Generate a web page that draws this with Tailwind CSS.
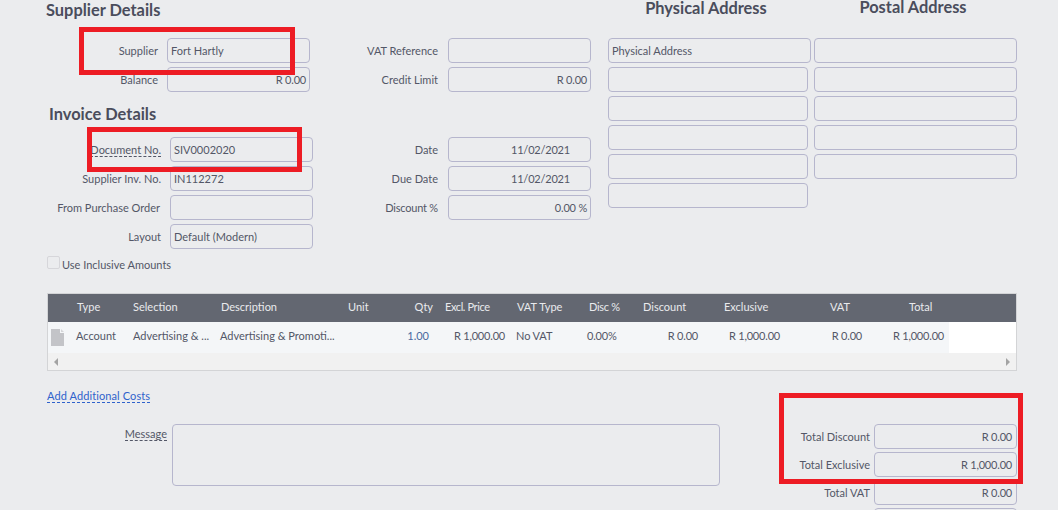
<!DOCTYPE html>
<html lang="en">
<head>
  <meta charset="UTF-8"/>
  <title>Supplier Invoice</title>
  <script src="https://cdn.jsdelivr.net/npm/@tailwindcss/browser@4"></script>
</head>
<body class="relative w-[1058px] h-[510px] overflow-hidden bg-[#ebecee] font-['Lato',sans-serif] text-[11px] text-[#535767]">

  <!-- top form -->
  <div class="flex h-[293px]">
    <div class="w-[591px]">
      <h2 class="h-[38px] pl-[46px] text-[16.4px] leading-[20px] font-bold text-[#4a4d5c]">Supplier Details</h2>

      <div class="grid grid-cols-[310px_281px] gap-y-[4px]">
        <div class="flex items-center"><span class="w-[158px] pt-[2px] text-right">Supplier</span><div class="ml-[9px] w-[143px] h-[25px] px-[3px] pt-[2px] flex items-center border border-[#b6b6cd] rounded-[4px]">Fort Hartly</div></div>
        <div class="flex items-center"><span class="w-[128px] pt-[2px] text-right">VAT Reference</span><div class="ml-[10px] w-[143px] h-[25px] px-[3px] flex items-center border border-[#b6b6cd] rounded-[4px]"></div></div>
        <div class="flex items-center"><span class="w-[158px] pt-[2px] text-right">Balance</span><div class="ml-[9px] w-[143px] h-[25px] pl-[3px] pr-[3px] pt-[2px] flex items-center justify-end border border-[#b6b6cd] rounded-[4px] tracking-[-0.2px]">R 0.00</div></div>
        <div class="flex items-center"><span class="w-[128px] pt-[2px] text-right">Credit Limit</span><div class="ml-[10px] w-[143px] h-[25px] pl-[3px] pr-[3px] pt-[2px] flex items-center justify-end border border-[#b6b6cd] rounded-[4px] tracking-[-0.2px]">R 0.00</div></div>
      </div>

      <h2 class="h-[45px] pl-[49px] pt-[12px] text-[16.4px] leading-[20px] font-bold text-[#4a4d5c]">Invoice Details</h2>

      <div class="grid grid-cols-[313px_278px] gap-y-[4px]">
        <div class="flex items-center"><span class="w-[161px] pt-[2px] text-right"><span class="border-b border-dashed border-[#535767]">Document No.</span></span><div class="ml-[9px] w-[143px] h-[25px] px-[3px] pt-[2px] flex items-center border border-[#b6b6cd] rounded-[4px]">SIV0002020</div></div>
        <div class="flex items-center"><span class="w-[125px] pt-[2px] text-right">Date</span><div class="ml-[10px] w-[143px] h-[25px] pr-[20px] pt-[2px] flex items-center justify-end border border-[#b6b6cd] rounded-[4px] tracking-[-0.2px]">11/02/2021</div></div>
        <div class="flex items-center"><span class="w-[161px] pt-[2px] text-right">Supplier Inv. No.</span><div class="ml-[9px] w-[143px] h-[25px] px-[3px] pt-[2px] flex items-center border border-[#b6b6cd] rounded-[4px]">IN112272</div></div>
        <div class="flex items-center"><span class="w-[125px] pt-[2px] text-right">Due Date</span><div class="ml-[10px] w-[143px] h-[25px] pr-[20px] pt-[2px] flex items-center justify-end border border-[#b6b6cd] rounded-[4px] tracking-[-0.2px]">11/02/2021</div></div>
        <div class="flex items-center"><span class="w-[160px] mr-[1px] pt-[2px] text-right">From Purchase Order</span><div class="ml-[9px] w-[143px] h-[25px] px-[3px] flex items-center border border-[#b6b6cd] rounded-[4px]"></div></div>
        <div class="flex items-center"><span class="w-[125px] pt-[2px] text-right tracking-[-0.2px]">Discount %</span><div class="ml-[10px] w-[143px] h-[25px] pl-[3px] pr-[3px] pt-[2px] flex items-center justify-end border border-[#b6b6cd] rounded-[4px] tracking-[-0.2px]">0.00 %</div></div>
        <div class="flex items-center"><span class="w-[161px] pt-[2px] text-right">Layout</span><div class="ml-[9px] w-[143px] h-[25px] px-[3px] pt-[2px] flex items-center border border-[#b6b6cd] rounded-[4px]">Default (Modern)</div></div>
      </div>

      <label class="flex items-center mt-[7px] pl-[47px] h-[13px]">
        <span class="w-[13px] h-[13px] border border-[#d6d6da] rounded-[2px]"></span>
        <span class="ml-[2px] mt-[5px]">Use Inclusive Amounts</span>
      </label>
    </div>

    <div class="ml-[17px] w-[203px]">
      <h2 class="h-[38px] pr-[7px] text-center text-[16.4px] leading-[16px] font-bold text-[#4a4d5c] whitespace-nowrap">Physical Address</h2>
      <div class="flex flex-col gap-[4px]">
        <div class="w-[203px] h-[25px] px-[3px] pt-[2px] flex items-center border border-[#b6b6cd] rounded-[4px]">Physical Address</div>
        <div class="w-[200px] h-[25px] border border-[#b6b6cd] rounded-[4px]"></div>
        <div class="w-[200px] h-[25px] border border-[#b6b6cd] rounded-[4px]"></div>
        <div class="w-[200px] h-[25px] border border-[#b6b6cd] rounded-[4px]"></div>
        <div class="w-[200px] h-[25px] border border-[#b6b6cd] rounded-[4px]"></div>
        <div class="w-[200px] h-[25px] border border-[#b6b6cd] rounded-[4px]"></div>
      </div>
    </div>

    <div class="ml-[3px] w-[203px]">
      <h2 class="h-[38px] pr-[5px] text-center text-[16.4px] leading-[14px] font-bold text-[#4a4d5c] whitespace-nowrap">Postal Address</h2>
      <div class="flex flex-col gap-[4px]">
        <div class="h-[25px] border border-[#b6b6cd] rounded-[4px]"></div>
        <div class="h-[25px] border border-[#b6b6cd] rounded-[4px]"></div>
        <div class="h-[25px] border border-[#b6b6cd] rounded-[4px]"></div>
        <div class="h-[25px] border border-[#b6b6cd] rounded-[4px]"></div>
        <div class="h-[25px] border border-[#b6b6cd] rounded-[4px]"></div>
      </div>
    </div>
  </div>

  <!-- lines table -->
  <div class="ml-[47px] w-[970px] h-[78px] border border-[#d3d4d6] bg-[#f1f1f1]">
    <div class="grid grid-cols-[25px_56px_87px_127px_48px_46px_72px_74px_44px_75px_82px_82px_82px] items-center h-[28px] pb-[2px] bg-[#636771] text-[#e9eaed]">
      <span></span>
      <span class="pl-[4px]">Type</span>
      <span class="pl-[4px]">Selection</span>
      <span class="pl-[5px]">Description</span>
      <span class="pl-[5px]">Unit</span>
      <span class="text-right pr-[4px]">Qty</span>
      <span class="pl-[8px] tracking-[-0.4px] whitespace-nowrap">Excl. Price</span>
      <span class="pl-[8px]">VAT Type</span>
      <span class="pl-[6px] tracking-[-0.3px]">Disc %</span>
      <span class="pl-[16px]">Discount</span>
      <span class="pl-[22px]">Exclusive</span>
      <span class="pl-[46px]">VAT</span>
      <span class="pl-[43px]">Total</span>
    </div>
    <div class="flex h-[31px] bg-white">
      <div class="grid grid-cols-[25px_56px_87px_127px_48px_46px_72px_74px_44px_75px_82px_82px_82px] items-center w-[901px] pb-[2px] bg-[#f4f6f8]">
        <svg class="ml-[3px] mt-[2px]" width="13" height="17" viewBox="0 0 13 17"><path d="M0 0H9V4H13V17H0Z" fill="#c3c4c8"/><path d="M10 0L13 3H10Z" fill="#d4d5d8"/></svg>
        <span class="pl-[3px]">Account</span>
        <span class="pl-[4px] truncate">Advertising &amp; ...</span>
        <span class="pl-[4px] whitespace-nowrap">Advertising &amp; Promoti...</span>
        <span></span>
        <span class="text-right pr-[8px] text-[#4a6a9f]">1.00</span>
        <span class="text-right pr-[4px] tracking-[-0.2px]">R 1,000.00</span>
        <span class="pl-[7px] tracking-[-0.1px]">No VAT</span>
        <span class="pl-[4px] tracking-[-0.2px]">0.00%</span>
        <span class="text-right pr-[4px] tracking-[-0.2px]">R 0.00</span>
        <span class="text-right pr-[4px] tracking-[-0.2px]">R 1,000.00</span>
        <span class="text-right pr-[4px] tracking-[-0.2px]">R 0.00</span>
        <span class="text-right pr-[4px] tracking-[-0.2px]">R 1,000.00</span>
      </div>
    </div>
    <div class="flex items-center justify-between h-[17px] pl-[6px] pr-[6px]">
      <span class="w-0 h-0 border-y-[4px] border-y-transparent border-r-[4px] border-r-[#a3a3a3]"></span>
      <span class="w-0 h-0 border-y-[4px] border-y-transparent border-l-[4px] border-l-[#a3a3a3]"></span>
    </div>
  </div>

  <!-- bottom -->
  <div class="ml-[47px] mt-[18px] h-[15px] leading-[14px]">
    <a class="text-[#2f62cc] border-b border-dashed border-[#2f62cc] tracking-[0.1px]">Add Additional Costs</a>
  </div>

  <div class="flex mt-[20px] h-[86px] overflow-hidden">
    <div class="w-[167px] shrink-0 pt-[2px] text-right"><span class="border-b border-dashed border-[#535767]">Message</span></div>
    <div class="ml-[5px] w-[548px] shrink-0 h-[62px] border border-[#b6b6cd] rounded-[4px]"></div>
    <div class="w-[297px] shrink-0 flex flex-col gap-[3px]">
      <div class="flex items-center justify-end"><span class="pt-[2px] whitespace-nowrap">Total Discount</span><div class="ml-[4px] w-[143px] h-[25px] px-[4px] pt-[2px] flex items-center justify-end border border-[#b6b6cd] rounded-[4px] tracking-[-0.2px]">R 0.00</div></div>
      <div class="flex items-center justify-end"><span class="pt-[2px] whitespace-nowrap">Total Exclusive</span><div class="ml-[4px] w-[143px] h-[25px] px-[4px] pt-[2px] flex items-center justify-end border border-[#b6b6cd] rounded-[4px] tracking-[-0.2px]">R 1,000.00</div></div>
      <div class="flex items-center justify-end"><span class="pt-[2px] whitespace-nowrap">Total VAT</span><div class="ml-[4px] w-[143px] h-[25px] px-[4px] pt-[2px] flex items-center justify-end border border-[#b6b6cd] rounded-[4px] tracking-[-0.2px]">R 0.00</div></div>
      <div class="flex items-center justify-end"><div class="w-[143px] h-[25px] shrink-0 border border-[#b6b6cd] rounded-[4px]"></div></div>
    </div>
  </div>

  <!-- red annotation boxes -->
  <div class="absolute left-[79px] top-[27px] w-[216px] h-[48px] border-[5px] border-[#ed1c24]"></div>
  <div class="absolute left-[87px] top-[127px] w-[215px] h-[45px] border-[5px] border-[#ed1c24]"></div>
  <div class="absolute left-[779px] top-[393px] w-[244px] h-[91px] border-[5px] border-[#ed1c24]"></div>
</body>
</html>
